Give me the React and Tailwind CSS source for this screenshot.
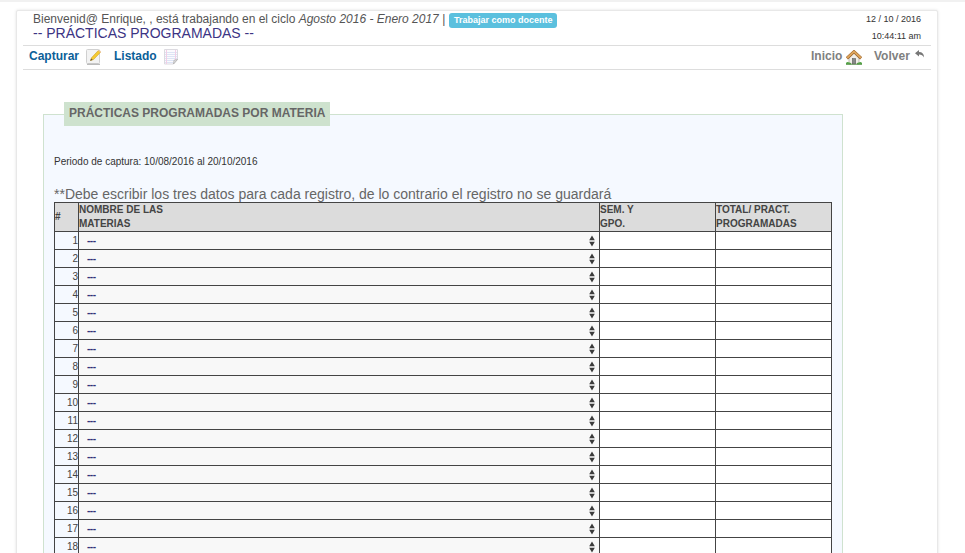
const rows = Array.from({ length: 18 }, (_, i) => i + 1);

function NoteIcon() {
  return (
    <svg width="16" height="16" viewBox="0 0 16 16">
      <rect x="0.5" y="0.5" width="13" height="14" rx="1" fill="#f3f3f3" stroke="#d0d0d0" />
      <path d="M1 15.300h13" stroke="#aaa" />
      <path d="M4.500 11.500l1-2.700L12.300 1.500l2.100 1.900L7.500 10.600z" fill="#f5cb32" stroke="#cfa02a" strokeWidth=".6" />
      <path d="M12.200 1.700l.9-.9 2 1.800-.9.9z" fill="#ecc19a" />
      <path d="M4.200 12l.9-2.400 1.600 1.200z" fill="#6b5b3a" />
    </svg>
  );
}

function ListIcon() {
  return (
    <svg width="15" height="16" viewBox="0 0 15 16">
      <path d="M.5.5h13v10l-4 4.500h-9z" fill="#fbfafd" stroke="#dcdae0" />
      <path d="M1 3.500h12M1 5.500h12M1 7.500h12M1 9.500h12M1 11.500h10M1 13.500h8" stroke="#dde4f5" />
      <path d="M2.500 1v14M11.500 1v10" stroke="#f2cfe6" />
      <path d="M9.500 15l.5-3.800 3.500-.7z" fill="#e2e2e2" stroke="#aaa" strokeWidth=".7" />
    </svg>
  );
}

function HouseIcon() {
  return (
    <svg width="16" height="15" viewBox="0 0 16 15">
      <path d="M3 7.500L8 3l5 4.500V14H3z" fill="#f0eee9" stroke="#a9a39a" strokeWidth=".7" />
      <path d="M.9 8.300L8 1.700l7.100 6.600" fill="none" stroke="#965c25" strokeWidth="3" />
      <path d="M1.100 7.900L8 1.500l6.900 6.400" fill="none" stroke="#dda55d" strokeWidth="2" />
      <rect x="6.300" y="8.500" width="3.400" height="5.500" fill="#888" stroke="#555" strokeWidth=".5" />
      <path d="M0 14.500v-1.500q1-1.500 2.500-.8l2.500.8v1.500zM11 14.500V13l2.500-.8q1.500-.5 2.500.8v1.500z" fill="#55a548" />
      <path d="M0 14.300h16" stroke="#58914b" strokeWidth=".8" />
    </svg>
  );
}

function ReplyIcon() {
  return (
    <svg width="10" height="8" viewBox="0 0 10 8">
      <path d="M0 3.200L4 0v2q5 0 5 5.500Q7.500 4.500 4 4.500v2z" fill="#777" />
    </svg>
  );
}

function Arrows() {
  return (
    <svg width="6" height="12" viewBox="0 0 6 12">
      <path d="M3 .5L5.800 5.200H.2zM3 11.500L.2 6.800h5.600z" fill="#3c3c3c" />
    </svg>
  );
}

export default function App() {
  return (
    <div className="h-[553px] w-[965px] overflow-hidden border-t-2 border-[#f1f1f1] bg-white pt-2 pl-4 font-['Liberation_Sans',Arial,sans-serif] whitespace-nowrap text-[#555]">
      <div className="h-[560px] w-[922px] rounded-[2px] border border-[#e8e8e8] bg-white px-1.5 shadow-[0_0_3px_rgba(0,0,0,0.12)]">
        <header className="flex h-[35px] justify-between border-b border-[#ddd] pr-[10px] pl-[10px]">
          <div>
            <div className="flex h-[15px] items-start text-[12px] leading-[17px]">
              <span>Bienvenid@ Enrique, , está trabajando en el ciclo <i>Agosto 2016 - Enero 2017</i> |</span>
              <span className="mt-[2px] ml-1 h-[15px] w-[108px] shrink-0 rounded-[3px] bg-[#5bc0de] text-center text-[9px] leading-[14px] font-bold text-white">Trabajar como docente</span>
            </div>
            <h1 className="text-[14px] leading-[15px] text-[#3c3484]">-- PRÁCTICAS PROGRAMADAS --</h1>
          </div>
          <div className="text-right text-[9px] leading-[17px] text-[#333]">
            <div>12 / 10 / 2016</div>
            <div>10:44:11 am</div>
          </div>
        </header>
        <nav className="flex h-6 items-start justify-between border-b border-[#ddd] pr-1.5 pl-1.5 text-[12px] leading-[21px] font-bold">
          <div className="flex text-[#0b6098]">
            <span className="w-[57px]">Capturar</span>
            <span className="mt-[3px] w-7"><NoteIcon /></span>
            <span className="w-[50px]">Listado</span>
            <span className="mt-[3px]"><ListIcon /></span>
          </div>
          <div className="flex text-[#808080]">
            <span className="w-[35px]">Inicio</span>
            <span className="mt-[4px] w-7"><HouseIcon /></span>
            <span className="w-[41px]">Volver</span>
            <span className="mt-1"><ReplyIcon /></span>
          </div>
        </nav>
        <section className="mt-[44px] ml-5 h-[500px] w-[800px] border border-[#cfe2cf] bg-[#f5f9ff] pl-[10px]">
          <h2 className="-mt-[13px] ml-[10px] h-[24px] w-[266px] bg-[#cee2ce] pl-[5px] text-[12px] leading-[22px] font-bold text-[#666]">PRÁCTICAS PROGRAMADAS POR MATERIA</h2>
          <p className="mt-[29px] h-[14px] text-[10px] leading-[14px] text-[#333]">Periodo de captura: 10/08/2016 al 20/10/2016</p>
          <p className="mt-[17px] h-4 text-[14px] leading-[17px] text-[#666]">**Debe escribir los tres datos para cada registro, de lo contrario el registro no se guardará</p>
          <div className="w-[778px] border-t border-l border-[#444] text-[10px] text-[#444]">
            <div className="grid h-[29px] grid-cols-[24px_521px_116px_116px] bg-[#dcdcdc] leading-[14px] font-bold [&>div]:border-r [&>div]:border-b [&>div]:border-[#444]">
              <div className="leading-[28px]">#</div>
              <div>NOMBRE DE LAS<br />MATERIAS</div>
              <div>SEM. Y<br />GPO.</div>
              <div>TOTAL/ PRACT.<br />PROGRAMADAS</div>
            </div>
            {rows.map((n) => (
              <div key={n} className="grid h-[18px] grid-cols-[24px_521px_116px_116px] leading-[17px] [&>div]:border-r [&>div]:border-b [&>div]:border-[#444]">
                <div className="text-right">{n}</div>
                <div className="flex items-center justify-between bg-[#f8f8f8] pr-1 pl-2 font-bold text-[#333377]">
                  <span className="tracking-[-0.5px]">---</span>
                  <Arrows />
                </div>
                <div className="bg-white" />
                <div className="bg-white" />
              </div>
            ))}
          </div>
        </section>
      </div>
    </div>
  );
}
